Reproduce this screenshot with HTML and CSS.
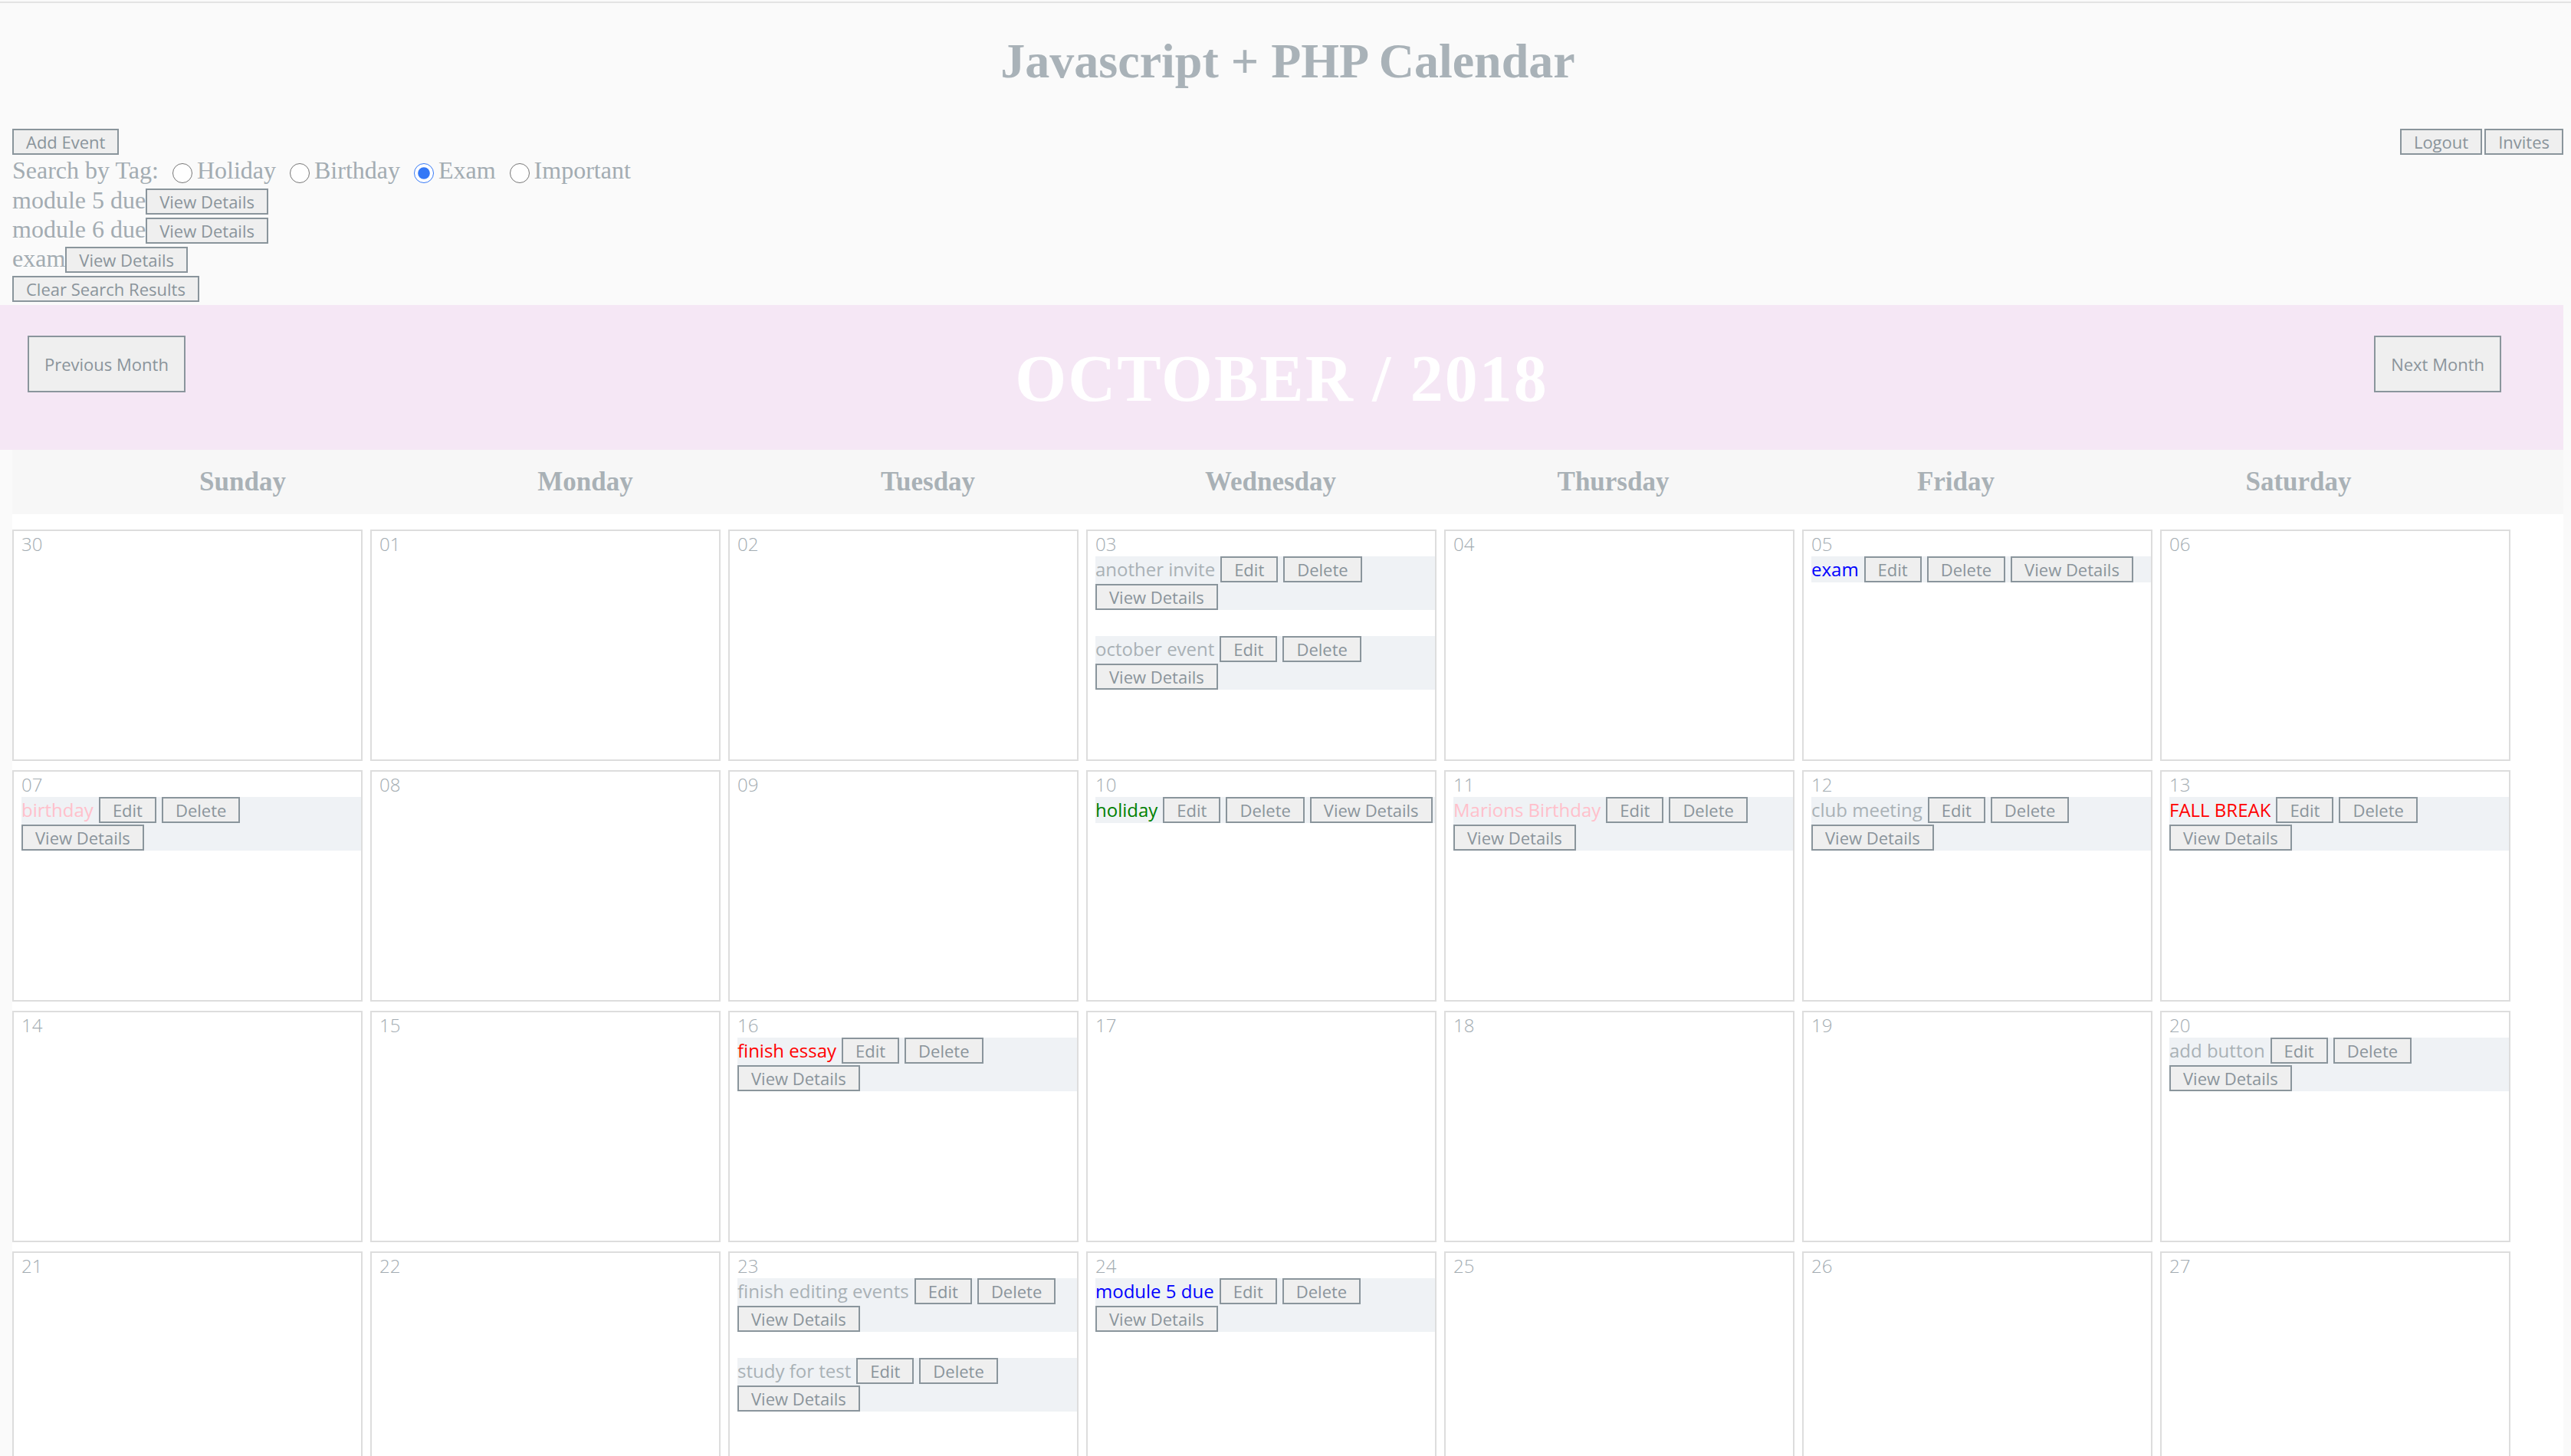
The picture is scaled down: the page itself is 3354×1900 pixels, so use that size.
FILE: index.html
```html
<!DOCTYPE html>
<html lang="en">
<head>
<meta charset="utf-8">
<title>Javascript + PHP Calendar</title>
<link rel="stylesheet" href="styles.css">
</head>
<body>
<div class="page">
  <div class="topline"></div>
  <h1 class="title">Javascript + PHP Calendar</h1>

  <div class="toolbar">
    <button class="btn">Add Event</button>
    <div class="account">
      <button class="btn">Logout</button>
      <button class="btn">Invites</button>
    </div>
  </div>

  <div class="search">Search by Tag: <label><input type="radio" name="tag" class="radio">Holiday</label> <label><input type="radio" name="tag" class="radio">Birthday</label> <label><input type="radio" name="tag" class="radio" checked>Exam</label> <label><input type="radio" name="tag" class="radio">Important</label></div>
  <div class="result">module 5 due<button class="btn">View Details</button></div>
  <div class="result">module 6 due<button class="btn">View Details</button></div>
  <div class="result">exam<button class="btn">View Details</button></div>
  <div class="result"><button class="btn">Clear Search Results</button></div>

  <div class="month-bar">
    <button class="btn nav-btn prev">Previous Month</button>
    <h2 class="month-title">OCTOBER / 2018</h2>
    <button class="btn nav-btn next">Next Month</button>
  </div>

  <div class="weekdays">
    <div class="wd">Sunday</div>
    <div class="wd">Monday</div>
    <div class="wd">Tuesday</div>
    <div class="wd">Wednesday</div>
    <div class="wd">Thursday</div>
    <div class="wd">Friday</div>
    <div class="wd">Saturday</div>
  </div>

  <div class="grid">
    <div class="cell"><div class="date">30</div></div>
    <div class="cell"><div class="date">01</div></div>
    <div class="cell"><div class="date">02</div></div>
    <div class="cell"><div class="date">03</div>
      <div class="event"><span class="ev-title c-gray">another invite</span><button class="btn">Edit</button><button class="btn">Delete</button><button class="btn">View Details</button></div>
      <div class="event"><span class="ev-title c-gray">october event</span><button class="btn">Edit</button><button class="btn">Delete</button><button class="btn">View Details</button></div>
    </div>
    <div class="cell"><div class="date">04</div></div>
    <div class="cell"><div class="date">05</div>
      <div class="event"><span class="ev-title c-blue">exam</span><button class="btn">Edit</button><button class="btn">Delete</button><button class="btn">View Details</button></div>
    </div>
    <div class="cell"><div class="date">06</div></div>

    <div class="cell"><div class="date">07</div>
      <div class="event"><span class="ev-title c-pink">birthday</span><button class="btn">Edit</button><button class="btn">Delete</button><button class="btn">View Details</button></div>
    </div>
    <div class="cell"><div class="date">08</div></div>
    <div class="cell"><div class="date">09</div></div>
    <div class="cell"><div class="date">10</div>
      <div class="event"><span class="ev-title c-green">holiday</span><button class="btn">Edit</button><button class="btn">Delete</button><button class="btn">View Details</button></div>
    </div>
    <div class="cell"><div class="date">11</div>
      <div class="event"><span class="ev-title c-pink">Marions Birthday</span><button class="btn">Edit</button><button class="btn">Delete</button><button class="btn">View Details</button></div>
    </div>
    <div class="cell"><div class="date">12</div>
      <div class="event"><span class="ev-title c-gray">club meeting</span><button class="btn">Edit</button><button class="btn">Delete</button><button class="btn">View Details</button></div>
    </div>
    <div class="cell"><div class="date">13</div>
      <div class="event"><span class="ev-title c-red">FALL BREAK</span><button class="btn">Edit</button><button class="btn">Delete</button><button class="btn">View Details</button></div>
    </div>

    <div class="cell"><div class="date">14</div></div>
    <div class="cell"><div class="date">15</div></div>
    <div class="cell"><div class="date">16</div>
      <div class="event"><span class="ev-title c-red">finish essay</span><button class="btn">Edit</button><button class="btn">Delete</button><button class="btn">View Details</button></div>
    </div>
    <div class="cell"><div class="date">17</div></div>
    <div class="cell"><div class="date">18</div></div>
    <div class="cell"><div class="date">19</div></div>
    <div class="cell"><div class="date">20</div>
      <div class="event"><span class="ev-title c-gray">add button</span><button class="btn">Edit</button><button class="btn">Delete</button><button class="btn">View Details</button></div>
    </div>

    <div class="cell"><div class="date">21</div></div>
    <div class="cell"><div class="date">22</div></div>
    <div class="cell"><div class="date">23</div>
      <div class="event"><span class="ev-title c-gray">finish editing events</span><button class="btn">Edit</button><button class="btn">Delete</button><button class="btn">View Details</button></div>
      <div class="event"><span class="ev-title c-gray">study for test</span><button class="btn">Edit</button><button class="btn">Delete</button><button class="btn">View Details</button></div>
    </div>
    <div class="cell"><div class="date">24</div>
      <div class="event"><span class="ev-title c-blue">module 5 due</span><button class="btn">Edit</button><button class="btn">Delete</button><button class="btn">View Details</button></div>
    </div>
    <div class="cell"><div class="date">25</div></div>
    <div class="cell"><div class="date">26</div></div>
    <div class="cell"><div class="date">27</div></div>
  </div>
</div>
</body>
</html>
```

FILE: styles.css
```css
html, body {
  margin: 0;
  padding: 0;
}

body {
  background: #fafafa;
  font-family: "Liberation Serif", "Times New Roman", serif;
  color: #a6afb5;
}

.page {
  padding: 0 10px 0 16px;
}

.topline {
  height: 2px;
  background: #e3e3e3;
  margin: 2px -10px 0 -16px;
}

.title {
  margin: 39px 0 0;
  font-size: 64px;
  line-height: 74px;
  font-weight: bold;
  text-align: center;
  color: #a9b2b8;
}

.btn {
  font-family: "Open Sans", "Liberation Sans", sans-serif;
  font-size: 22px;
  line-height: 30px;
  padding: 0 16px;
  margin: 0;
  border: 2px solid #8a959c;
  border-radius: 0;
  background: #efefef;
  color: #8a949b;
  display: inline-block;
  vertical-align: baseline;
  box-sizing: border-box;
  cursor: pointer;
}

.toolbar {
  display: flex;
  justify-content: space-between;
  align-items: flex-start;
  margin-top: 51px;
}

.account {
  display: flex;
  gap: 3px;
}

.search {
  font-size: 32px;
  line-height: 40px;
  color: #a3acb2;
}

.radio {
  width: 26px;
  height: 26px;
  margin: 0 6px 0 10px;
  vertical-align: middle;
  accent-color: #3478f6;
}

.result {
  font-size: 32px;
  line-height: 38px;
  color: #a3acb2;
}

.month-bar {
  margin: 4px 0 0 -16px;
  height: 189px;
  background: #f5e7f5;
  display: grid;
  grid-template-columns: 1fr auto 1fr;
  align-items: start;
}

.nav-btn {
  padding: 20px 20px;
  margin-top: 40px;
}

.prev {
  justify-self: start;
  margin-left: 36px;
}

.next {
  justify-self: end;
  margin-right: 81px;
}

.month-title {
  margin: 53px 0 0;
  font-size: 86px;
  line-height: 86px;
  font-weight: bold;
  letter-spacing: 2px;
  color: #ffffff;
}

.weekdays {
  display: flex;
  align-items: center;
  height: 84px;
  background: #f7f7f7;
  padding-left: 77px;
}

.wd {
  flex: none;
  width: 447px;
  text-align: center;
  font-size: 35px;
  font-weight: bold;
  color: #a9b1b6;
}

.grid {
  background: #ffffff;
  padding-top: 20px;
  display: grid;
  grid-template-columns: repeat(7, 457px);
  gap: 12px 10px;
}

.cell {
  height: 302px;
  box-sizing: border-box;
  border: 2px solid #dddddd;
  padding-left: 10px;
  background: #ffffff;
  font-family: "Open Sans", "Liberation Sans", sans-serif;
}

.date {
  font-size: 24px;
  line-height: 33px;
  font-weight: 300;
  color: #a2abb1;
}

.event {
  display: flex;
  flex-wrap: wrap;
  align-items: baseline;
  gap: 2px 7px;
  background: #eff2f5;
}

.event + .event {
  margin-top: 34px;
}

.ev-title {
  font-size: 24px;
  line-height: 33px;
}

.c-gray { color: #a9b1b6; }
.c-blue { color: #0000ff; }
.c-green { color: #008000; }
.c-red { color: #ff0000; }
.c-pink { color: #ffc0cb; }
```
